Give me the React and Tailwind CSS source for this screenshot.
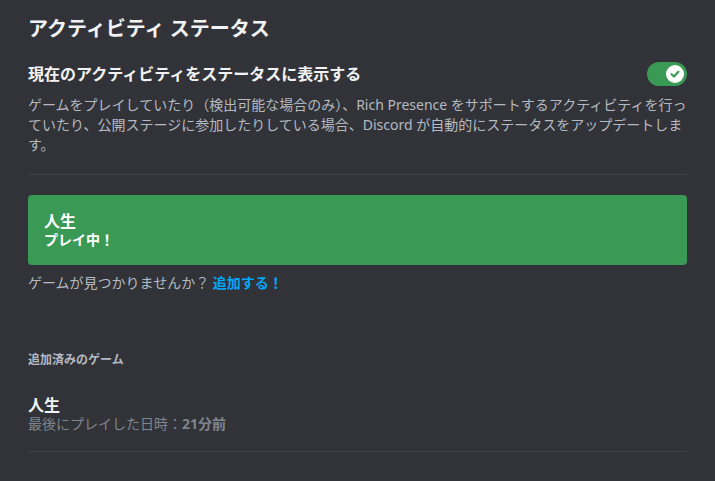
import React from "react";

const font = { fontFamily: '"Noto Sans", "Noto Sans CJK JP", sans-serif' };

function Toggle() {
  return (
    <div className="w-[40px] h-[24px] rounded-full bg-[#3a9a55] flex items-center justify-end pr-[3px] shrink-0">
      <div className="w-[18px] h-[18px] rounded-full bg-white flex items-center justify-center">
        <svg width="12" height="12" viewBox="0 0 12 12">
          <path d="M2.6 6.2 L5 8.5 L9.4 3.8" fill="none" stroke="#3a9a55" strokeWidth="2.2" strokeLinecap="round" strokeLinejoin="round" />
        </svg>
      </div>
    </div>
  );
}

export default function App() {
  return (
    <div className="w-[715px] h-[481px] bg-[#313338] overflow-hidden" style={font}>
      <div className="px-[28px] pt-[17px] flex flex-col">
        <h1 className="text-[20px] leading-[24px] font-bold text-[#f2f3f5]">アクティビティ ステータス</h1>

        <div className="mt-[21px] h-[24px] flex items-center justify-between">
          <div className="text-[16px] leading-[20px] font-bold text-[#f2f3f5]">現在のアクティビティをステータスに表示する</div>
          <Toggle />
        </div>

        <div className="mt-[9px] text-[14px] leading-[20px] text-[#b5bac1]">
          <div className="whitespace-nowrap">ゲームをプレイしていたり（検出可能な場合のみ）、Rich Presence をサポートするアクティビティを行っ</div>
          <div className="whitespace-nowrap">ていたり、公開ステージに参加したりしている場合、Discord が自動的にステータスをアップデートしま</div>
          <div className="whitespace-nowrap">す。</div>
        </div>

        <div className="mt-[19px] h-px bg-[#3f4147]" />

        <div className="mt-[20px] h-[70px] rounded-[4px] bg-[#3a9a55] px-[16px] flex flex-col justify-center">
          <div className="text-[16px] leading-[20px] font-bold text-white">人生</div>
          <div className="text-[14px] leading-[18px] font-semibold text-white">プレイ中！</div>
        </div>

        <div className="mt-[8px] text-[14px] leading-[20px] text-[#b5bac1]">
          ゲームが見つかりませんか？ <span className="text-[#00a8fc] font-semibold">追加する！</span>
        </div>

        <div className="mt-[59px] text-[12px] leading-[16px] font-bold text-[#b5bac1]">追加済みのゲーム</div>

        <div className="mt-[27px] text-[16px] leading-[20px] font-bold text-[#f2f3f5]">人生</div>
        <div className="text-[14px] leading-[18px] text-[#80848e]">
          最後にプレイした日時：<span className="font-bold">21分前</span>
        </div>

        <div className="mt-[18px] h-px bg-[#3f4147]" />
      </div>
    </div>
  );
}
